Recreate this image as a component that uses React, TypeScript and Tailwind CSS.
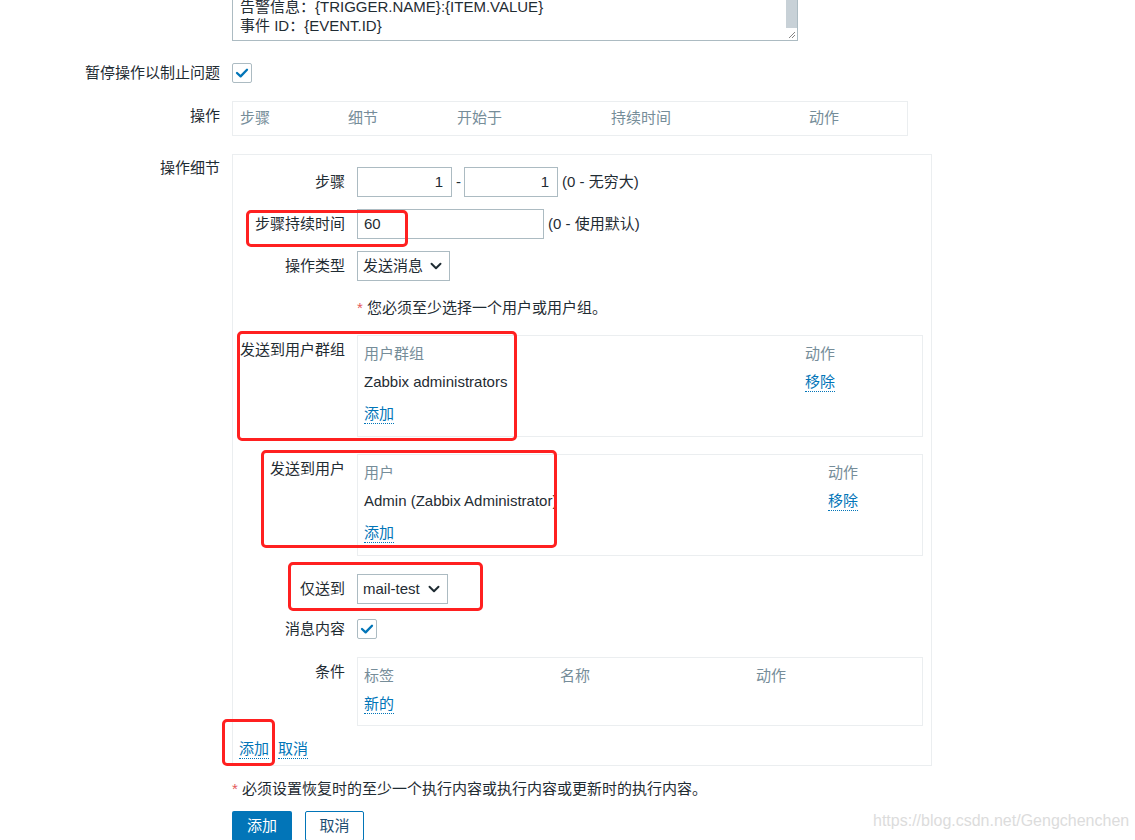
import React from "react";
import { ChevronDown } from "lucide-react";

const LINK = "inline-block leading-[19px] text-[#0275b8] border-b border-dotted border-[#0275b8] cursor-pointer";

function Check() {
  return (
    <div className="w-[20px] h-[20px] border border-[#acbbc2] rounded-[2px] flex items-center justify-center bg-white">
      <svg width="14" height="14" viewBox="0 0 14 14">
        <polyline points="2,7 5.6,10.4 12,3.8" fill="none" stroke="#0275b8" strokeWidth="2.3" strokeLinecap="round" strokeLinejoin="round" />
      </svg>
    </div>
  );
}

function Select({ value, w }: { value: string; w: string }) {
  return (
    <div className={`${w} h-[30px] border border-[#acbbc2] flex items-center justify-between pl-[5px] pr-[4px] bg-white`}>
      <span>{value}</span>
      <ChevronDown size={18} strokeWidth={2.6} className="text-[#1f2c33]" />
    </div>
  );
}

function Row({ label, pt = "", className = "", children }: { label: string; pt?: string; className?: string; children: React.ReactNode }) {
  return (
    <div className={`flex ${className}`}>
      <div className={`w-[220px] shrink-0 text-right ${pt}`}>{label}</div>
      <div className="ml-[12px]">{children}</div>
    </div>
  );
}

function InnerRow({ label, pt = "", className = "", children }: { label: string; pt?: string; className?: string; children: React.ReactNode }) {
  return (
    <div className={`flex ${className}`}>
      <div className={`w-[112px] shrink-0 text-right whitespace-nowrap ${pt}`}>{label}</div>
      <div className="ml-[12px]">{children}</div>
    </div>
  );
}

function RecipientBox({ head, item, col }: { head: string; item: string; col: string }) {
  return (
    <div className="w-[566px] h-[102px] border border-[#ebeef0] pl-[6px] pt-[8px] leading-[19px]">
      <div className="flex text-[#768d99]">
        <div className={`${col} shrink-0`}>{head}</div>
        <div>动作</div>
      </div>
      <div className="flex mt-[9px]">
        <div className={`${col} shrink-0 whitespace-nowrap`}>{item}</div>
        <div>
          <span className={LINK}>移除</span>
        </div>
      </div>
      <div className="mt-[12px]">
        <span className={LINK}>添加</span>
      </div>
    </div>
  );
}

export default function App() {
  return (
    <div className="relative w-[1135px] h-[840px] overflow-hidden bg-white text-[15px] text-[#1f2c33] font-['Liberation_Sans','Noto_Sans_CJK_SC',sans-serif]">
      {/* textarea, scrolled to the end */}
      <div className="ml-[232px] w-[566px] h-[41px] border-x border-b border-[#acbbc2] relative flex flex-col justify-end pb-[5px] pl-[7px] leading-[19px] overflow-hidden">
        <div>告警信息：{"{TRIGGER.NAME}:{ITEM.VALUE}"}</div>
        <div>事件 ID：{"{EVENT.ID}"}</div>
        <div className="absolute right-0 top-0 w-[11px] h-[28px] bg-[#c8d1d7]" />
        <svg className="absolute right-[1px] bottom-[1px]" width="8" height="8" viewBox="0 0 8 8">
          <line x1="7" y1="1" x2="1" y2="7" stroke="#666" strokeWidth="0.8" />
          <line x1="7" y1="4" x2="4" y2="7" stroke="#666" strokeWidth="0.8" />
        </svg>
      </div>

      <Row label="暂停操作以制止问题" className="mt-[22px] leading-[20px]">
        <Check />
      </Row>

      <Row label="操作" pt="pt-[5px] leading-[19px]" className="mt-[18px]">
        <div className="w-[676px] h-[35px] border border-[#ebeef0] flex items-center pl-[7px] text-[#768d99]">
          <div className="w-[108px]">步骤</div>
          <div className="w-[109px]">细节</div>
          <div className="w-[154px]">开始于</div>
          <div className="w-[198px]">持续时间</div>
          <div>动作</div>
        </div>
      </Row>

      <Row label="操作细节" pt="pt-[4px] leading-[19px]" className="mt-[18px]">
        <div className="w-[700px] h-[612px] border border-[#ebeef0]">
          <InnerRow label="步骤" pt="leading-[30px]" className="mt-[12px]">
            <div className="flex items-center">
              <div className="w-[95px] h-[30px] border border-[#acbbc2] text-right pr-[8px] leading-[28px]">1</div>
              <span className="ml-[4px] mr-[3px]">-</span>
              <div className="w-[94px] h-[30px] border border-[#acbbc2] text-right pr-[8px] leading-[28px]">1</div>
              <span className="ml-[4px]">(0 - 无穷大)</span>
            </div>
          </InnerRow>
          <InnerRow label="步骤持续时间" pt="leading-[30px]" className="mt-[12px]">
            <div className="flex items-center">
              <div className="w-[187px] h-[30px] border border-[#acbbc2] pl-[6px] leading-[28px]">60</div>
              <span className="ml-[4px]">(0 - 使用默认)</span>
            </div>
          </InnerRow>
          <InnerRow label="操作类型" pt="leading-[30px]" className="mt-[12px]">
            <Select value="发送消息" w="w-[93px]" />
          </InnerRow>
          <InnerRow label="" className="mt-[17px] leading-[19px]">
            <div>
              <span className="text-[#e45959]">*</span> 您必须至少选择一个用户或用户组。
            </div>
          </InnerRow>
          <InnerRow label="发送到用户群组" pt="pt-[5px] leading-[19px]" className="mt-[18px]">
            <RecipientBox head="用户群组" item="Zabbix administrators" col="w-[441px]" />
          </InnerRow>
          <InnerRow label="发送到用户" pt="pt-[5px] leading-[19px]" className="mt-[17px]">
            <RecipientBox head="用户" item="Admin (Zabbix Administrator)" col="w-[464px]" />
          </InnerRow>
          <InnerRow label="仅送到" pt="leading-[30px]" className="mt-[18px]">
            <Select value="mail-test" w="w-[91px]" />
          </InnerRow>
          <InnerRow label="消息内容" pt="leading-[20px]" className="mt-[15px]">
            <Check />
          </InnerRow>
          <InnerRow label="条件" pt="pt-[5px] leading-[19px]" className="mt-[18px]">
            <div className="w-[566px] h-[69px] border border-[#ebeef0] pl-[6px] pt-[8px] leading-[19px]">
              <div className="flex text-[#768d99]">
                <div className="w-[196px]">标签</div>
                <div className="w-[196px]">名称</div>
                <div>动作</div>
              </div>
              <div className="mt-[9px]">
                <span className={LINK}>新的</span>
              </div>
            </div>
          </InnerRow>
          <div className="mt-[13px] ml-[6px] flex gap-[9px]">
            <span className={LINK}>添加</span>
            <span className={LINK}>取消</span>
          </div>
        </div>
      </Row>

      <div className="ml-[232px] mt-[13px] leading-[19px]">
        <span className="text-[#e45959]">*</span> 必须设置恢复时的至少一个执行内容或执行内容或更新时的执行内容。
      </div>

      <div className="ml-[232px] mt-[13px] flex gap-[13px]">
        <button className="w-[60px] h-[30px] bg-[#0275b8] text-white rounded-[2px]">添加</button>
        <button className="w-[59px] h-[30px] border border-[#0275b8] text-[#1f4f73] bg-white rounded-[2px]">取消</button>
      </div>

      {/* red annotation boxes drawn on top of the screenshot */}
      <div className="absolute left-[246px] top-[210px] w-[162px] h-[37px] border-[3px] border-[#ff2020] rounded-[5px]" />
      <div className="absolute left-[237px] top-[331px] w-[280px] h-[110px] border-[3px] border-[#ff2020] rounded-[5px]" />
      <div className="absolute left-[261px] top-[450px] w-[296px] h-[98px] border-[3px] border-[#ff2020] rounded-[5px]" />
      <div className="absolute left-[288px] top-[562px] w-[195px] h-[49px] border-[3px] border-[#ff2020] rounded-[5px]" />
      <div className="absolute left-[222px] top-[719px] w-[53px] h-[47px] border-[3px] border-[#ff2020] rounded-[5px]" />

      <div className="absolute left-[873px] top-[811px] text-[16px] leading-[20px] text-[#dcdcdc] font-['Liberation_Sans',sans-serif]">
        https://blog.csdn.net/Gengchenchen
      </div>
    </div>
  );
}
